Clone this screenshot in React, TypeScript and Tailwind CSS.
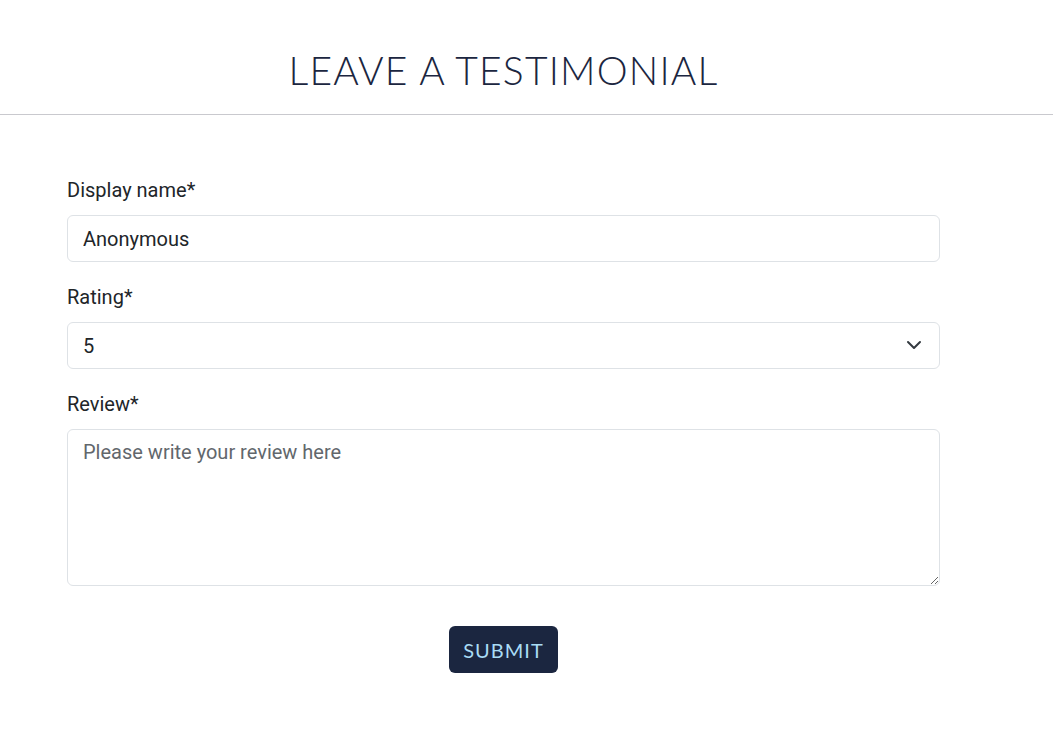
export default function App() {
    return (
        <div className="min-h-screen bg-white font-['Roboto',sans-serif] text-[#212529]">
            <header className="border-b border-[#c9c9ce]">
                <div className="ml-[67px] w-[873px] pt-[47px] pb-[21px] text-center">
                    <h1 className="font-['Lato',sans-serif] font-light text-[39px] leading-[46px] tracking-[1.2px] text-[#1b2640]">
                        LEAVE A TESTIMONIAL
                    </h1>
                </div>
            </header>

            <form className="ml-[67px] w-[873px] pt-[60px]">
                <div className="mb-[20px]">
                    <label htmlFor="name" className="block text-[20px] leading-[30px] mb-[10px]">
                        Display name*
                    </label>
                    <input
                        id="name"
                        type="text"
                        defaultValue="Anonymous"
                        className="block w-full h-[47px] border border-[#dee2e6] rounded-[6px] px-[15px] text-[20px] text-[#212529] outline-none"
                    />
                </div>

                <div className="mb-[20px]">
                    <label htmlFor="rating" className="block text-[20px] leading-[30px] mb-[10px]">
                        Rating*
                    </label>
                    <div className="relative">
                        <select
                            id="rating"
                            defaultValue="5"
                            className="block w-full h-[47px] appearance-none border border-[#dee2e6] rounded-[6px] px-[15px] text-[20px] bg-white outline-none"
                        >
                            <option value="1">1</option>
                            <option value="2">2</option>
                            <option value="3">3</option>
                            <option value="4">4</option>
                            <option value="5">5</option>
                        </select>
                        <svg
                            className="absolute right-[18px] top-[17px] pointer-events-none"
                            width="16"
                            height="12"
                            viewBox="0 0 16 12"
                            fill="none"
                        >
                            <path d="M2 3l6 6 6-6" stroke="#343a40" strokeWidth="2" strokeLinecap="round" strokeLinejoin="round" />
                        </svg>
                    </div>
                </div>

                <div className="mb-[40px]">
                    <label htmlFor="review" className="block text-[20px] leading-[30px] mb-[10px]">
                        Review*
                    </label>
                    <textarea
                        id="review"
                        placeholder="Please write your review here"
                        className="block w-full h-[157px] border border-[#dee2e6] rounded-[6px] px-[15px] py-[7px] text-[20px] leading-[30px] placeholder:text-[#62676c] outline-none"
                    ></textarea>
                </div>

                <div className="flex justify-center">
                    <button
                        type="submit"
                        className="h-[47px] px-[14px] rounded-[6px] bg-[#1b2640] text-[#a9dcf5] font-['Lato',sans-serif] text-[20px] tracking-[1px]"
                    >
                        SUBMIT
                    </button>
                </div>
            </form>
        </div>
    );
}
